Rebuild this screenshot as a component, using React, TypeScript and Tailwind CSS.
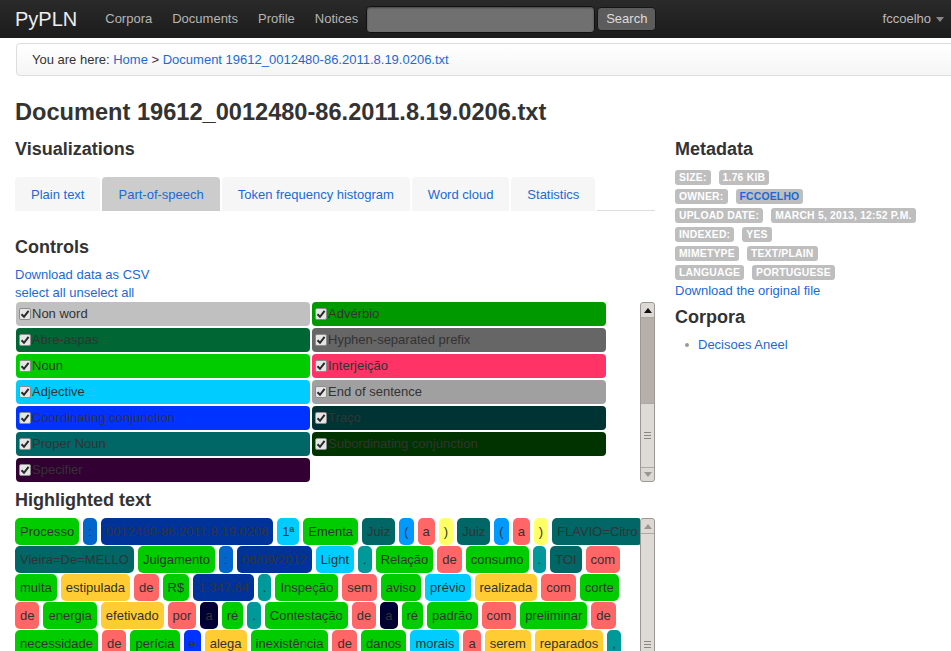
import React from 'react';

const LINK = 'text-[#1a6ad6]';

type Tok = [string, string];

const N = '#00cc00';
const PREP = '#ff6666';
const ADJ = '#ffcc33';
const PUNCT = '#009999';
const NUM = '#003399';
const PROPER = '#006666';
const CYAN = '#00ccff';
const COLON = '#0066cc';
const ART = '#000033';

const rows: Tok[][] = [
  [
    ['Processo', N], [':', COLON], ['0012480-86.2011.8.19.0206', NUM], ['1ª', CYAN], ['Ementa', N],
    ['Juiz', PROPER], ['(', '#0099ff'], ['a', PREP], [')', '#ffff66'], ['Juiz', PROPER],
    ['(', '#0099ff'], ['a', PREP], [')', '#ffff66'], ['FLAVIO=Citro', PROPER],
  ],
  [
    ['Vieira=De=MELLO', PROPER], ['Julgamento', N], [':', COLON], ['06/09/2012', NUM], ['Light', CYAN],
    ['.', PUNCT], ['Relação', N], ['de', PREP], ['consumo', N], ['.', PUNCT], ['TOI', PROPER], ['com', PREP],
  ],
  [
    ['multa', N], ['estipulada', ADJ], ['de', PREP], ['R$', N], ['1.347,64', NUM], ['.', PUNCT],
    ['Inspeção', N], ['sem', PREP], ['aviso', N], ['prévio', CYAN], ['realizada', ADJ], ['com', PREP], ['corte', N],
  ],
  [
    ['de', PREP], ['energia', N], ['efetivado', ADJ], ['por', PREP], ['a', ART], ['ré', N], ['.', PUNCT],
    ['Contestação', N], ['de', PREP], ['a', ART], ['ré', N], ['padrão', N], ['com', PREP], ['preliminar', N], ['de', PREP],
  ],
  [
    ['necessidade', N], ['de', PREP], ['perícia', N], ['e', '#0033ff'], ['alega', ADJ], ['inexistência', N],
    ['de', PREP], ['danos', N], ['morais', CYAN], ['a', PREP], ['serem', ADJ], ['reparados', ADJ], [',', PUNCT],
  ],
];

const legend: Tok[] = [
  ['Non word', '#c0c0c0'], ['Advérbio', '#009900'],
  ['Abre-aspas', '#006633'], ['Hyphen-separated prefix', '#666666'],
  ['Noun', '#00cc00'], ['Interjeição', '#ff3366'],
  ['Adjective', '#00ccff'], ['End of sentence', '#a0a0a0'],
  ['Coordinating conjunction', '#0033ff'], ['Traço', '#003333'],
  ['Proper Noun', '#006666'], ['Subordinating conjunction', '#003300'],
  ['Specifier', '#330033'],
];

const meta: [string, string, boolean?][] = [
  ['Size:', '1.76 KiB'],
  ['Owner:', 'fccoelho', true],
  ['Upload date:', 'March 5, 2013, 12:52 p.m.'],
  ['Indexed:', 'Yes'],
  ['Mimetype', 'text/plain'],
  ['Language', 'portuguese'],
];

function Check() {
  return (
    <span className="mr-px flex h-[12px] w-[12px] shrink-0 items-center justify-center rounded-[2px] border border-[#8d8d8d] bg-[#e6e6e6]">
      <svg width="10" height="10" viewBox="0 0 10 10">
        <path d="M1.5 5.2 L4 7.8 L8.6 1.8" fill="none" stroke="#2a2a2a" strokeWidth="2" />
      </svg>
    </span>
  );
}

function Arrow({ up, color }: { up?: boolean; color: string }) {
  return (
    <svg width="8" height="5" viewBox="0 0 8 5">
      <path d={up ? 'M0 5 L4 0 L8 5 Z' : 'M0 0 L4 5 L8 0 Z'} fill={color} />
    </svg>
  );
}

function Grip() {
  return (
    <div className="flex w-[7px] flex-col gap-[2px]">
      <div className="h-px bg-[#8a8682]" />
      <div className="h-px bg-[#8a8682]" />
      <div className="h-px bg-[#8a8682]" />
    </div>
  );
}

export default function App() {
  return (
    <div className="h-[651px] w-[951px] overflow-hidden bg-white font-['Liberation_Sans',Arial,sans-serif] text-[13px] text-[#333]">
      {/* navbar */}
      <div className="flex h-[38px] items-center bg-gradient-to-b from-[#2a2a2a] to-[#1c1c1c] pl-[15px] pr-[7px]">
        <span className="text-[20px] text-[#eeeeee]">PyPLN</span>
        <nav className="ml-[18px] flex text-[#b5b5b5]">
          <a className="px-[10px]">Corpora</a>
          <a className="px-[10px]">Documents</a>
          <a className="px-[10px]">Profile</a>
          <a className="px-[10px]">Notices</a>
        </nav>
        <div className="ml-[-2px] h-[27px] w-[229px] rounded-[4px] border border-[#111] bg-[#707070] shadow-[inset_0_1px_2px_rgba(0,0,0,0.4)]" />
        <button className="ml-[2px] h-[24px] rounded-[4px] border border-[#151515] bg-[#5c5c5c] px-[8px] text-[13px] text-[#dddddd]">
          Search
        </button>
        <div className="ml-auto flex items-center gap-[5px] text-[#bcbcbc]">
          <span>fccoelho</span>
          <Arrow color="#888" />
        </div>
      </div>

      {/* breadcrumb */}
      <div className="ml-[16px] mt-[5px] flex h-[33px] w-[960px] items-center rounded-[4px] border border-[#dddddd] bg-gradient-to-b from-white to-[#f5f5f5] pl-[15px]">
        <span>You are here:&nbsp;</span>
        <a className={LINK}>Home</a>
        <span>&nbsp;&gt;&nbsp;</span>
        <a className={LINK}>Document 19612_0012480-86.2011.8.19.0206.txt</a>
      </div>

      <div className="px-[15px]">
        <h1 className="mt-[21px] text-[23.6px] font-bold leading-[30px]">Document 19612_0012480-86.2011.8.19.0206.txt</h1>

        <div className="flex gap-[20px]">
          {/* left column */}
          <div className="w-[640px] shrink-0">
            <h3 className="mt-[10px] text-[18px] font-bold leading-[24px]">Visualizations</h3>

            <div className="mt-[16px] flex items-end">
              {['Plain text', 'Part-of-speech', 'Token frequency histogram', 'Word cloud', 'Statistics'].map((t, i) => (
                <div
                  key={t}
                  className={`mr-[2px] flex h-[34px] items-center rounded-t-[4px] px-[16px] pt-px ${LINK} ${i === 1 ? 'bg-[#cccccc]' : 'bg-[#f6f6f6]'}`}
                >
                  {t}
                </div>
              ))}
              <div className="h-px flex-1 bg-[#dddddd]" />
            </div>

            <h3 className="mt-[24px] text-[18px] font-bold leading-[24px]">Controls</h3>
            <div className={`mt-[7px] leading-[18px] ${LINK}`}>Download data as CSV</div>
            <div className={`leading-[18px] ${LINK}`}>select all unselect all</div>

            <div className="flex h-[180px]">
              <div className="ml-px grid w-[590px] grid-cols-2 content-start gap-[2px]">
                {legend.map(([name, color]) => (
                  <div key={name} className="flex h-[24px] items-center rounded-[4px] pl-[3px]" style={{ backgroundColor: color }}>
                    <Check />
                    <span>{name}</span>
                  </div>
                ))}
              </div>
              <div className="ml-auto flex w-[15px] flex-col overflow-hidden rounded-[3px] border border-[#9c9894] bg-[#dcd8d4]">
                <div className="flex h-[15px] shrink-0 items-center justify-center border-b border-[#aca8a4]">
                  <Arrow up color="#111" />
                </div>
                <div className="h-[85px] shrink-0 bg-[#b6afaa]" />
                <div className="flex flex-1 items-center justify-center border-y border-[#aca8a4] bg-[#dedad6]">
                  <Grip />
                </div>
                <div className="flex h-[13px] shrink-0 items-center justify-center">
                  <Arrow color="#9a9692" />
                </div>
              </div>
            </div>

            <h3 className="mt-[6px] text-[18px] font-bold leading-[24px]">Highlighted text</h3>

            <div className="mt-[6px] flex h-[260px]">
              <div className="flex w-[625px] flex-col gap-px overflow-hidden">
                {rows.map((row, r) => (
                  <div key={r} className="flex gap-[4px] whitespace-nowrap">
                    {row.map(([w, c], i) => (
                      <span key={i} className="h-[27px] shrink-0 rounded-[5px] px-[5px] leading-[27px]" style={{ backgroundColor: c }}>
                        {w}
                      </span>
                    ))}
                  </div>
                ))}
              </div>
              <div className="ml-auto flex w-[15px] flex-col overflow-hidden rounded-[3px] border border-[#9c9894] bg-[#dcd8d4]">
                <div className="flex h-[15px] shrink-0 items-center justify-center border-b border-[#aca8a4]">
                  <Arrow up color="#9a9692" />
                </div>
                <div className="flex h-[220px] shrink-0 items-center justify-center bg-[#dedad6]">
                  <Grip />
                </div>
                <div className="flex-1 bg-[#b6afaa]" />
              </div>
            </div>
          </div>

          {/* right column */}
          <div className="flex-1">
            <h3 className="mt-[10px] text-[18px] font-bold leading-[24px]">Metadata</h3>
            <div className="mt-[9px] flex flex-col gap-[4px]">
              {meta.map(([k, v, link]) => (
                <div key={k} className="flex gap-[8px]">
                  <span className="h-[15px] rounded-[3px] bg-[#bebebe] px-[4px] text-[10.4px] font-bold uppercase leading-[15px] tracking-[0.2px] text-white">{k}</span>
                  <span
                    className={`h-[15px] rounded-[3px] bg-[#bebebe] px-[4px] text-[10.4px] font-bold uppercase leading-[15px] tracking-[0.2px] ${link ? 'text-[#1a6ad6]' : 'text-white'}`}
                  >
                    {v}
                  </span>
                </div>
              ))}
            </div>
            <div className={`mt-[2px] leading-[18px] ${LINK}`}>Download the original file</div>
            <h3 className="mt-[5px] text-[18px] font-bold leading-[24px]">Corpora</h3>
            <div className="mt-[6px] flex h-[20px] items-center pl-[10px]">
              <span className="mr-[9px] h-[4px] w-[4px] rounded-full bg-[#999]" />
              <a className={LINK}>Decisoes Aneel</a>
            </div>
          </div>
        </div>
      </div>
    </div>
  );
}
